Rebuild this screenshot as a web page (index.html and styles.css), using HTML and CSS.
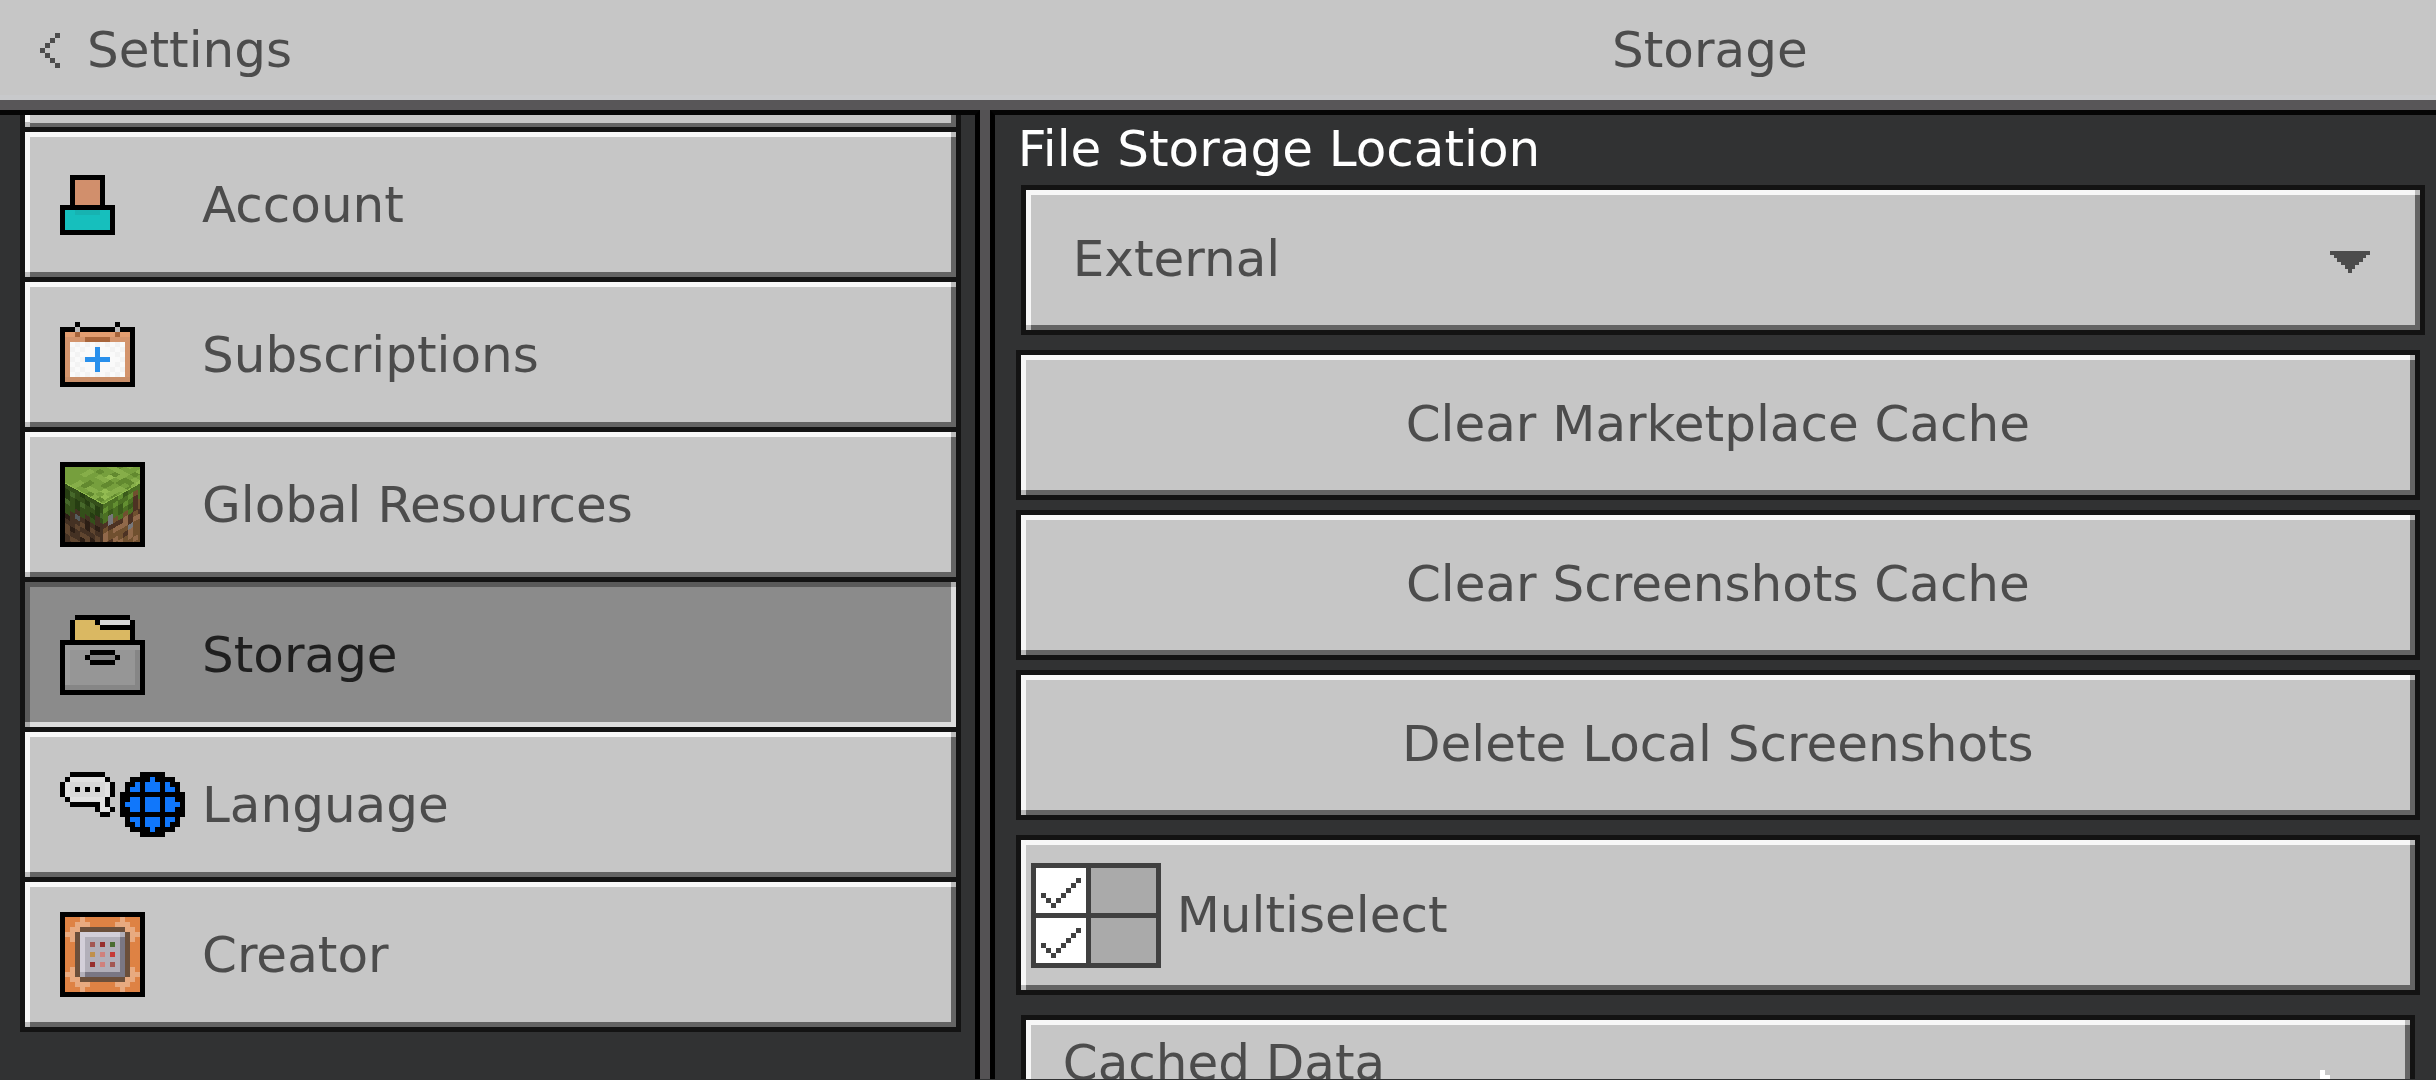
FILE: index.html
```html
<!DOCTYPE html>
<html lang="en">

<head>
  <meta charset="UTF-8">
  <meta name="viewport" content="width=device-width, initial-scale=1">
  <title>Settings</title>
  <link rel="stylesheet" href="styles.css">
</head>

<body>
  <header class="top-bar">
    <button class="back-button">
      <svg class="back-icon" viewBox="0 0 4 7" aria-hidden="true">
        <path fill="#4c4c4c" d="M3 0h1v1h-1zM2 1h1v1h-1zM1 2h1v1h-1zM0 3h1v1h-1zM1 4h1v1h-1zM2 5h1v1h-1zM3 6h1v1h-1z" />
      </svg>
      <span>Settings</span>
    </button>
    <h1 class="page-title">Storage</h1>
  </header>

  <div class="content">
    <!-- Section list -->
    <nav class="sidebar">
      <div class="section-list">
        <div class="bevel section-end"></div>

        <button class="bevel section">
          <span class="section-icon">
            <svg width="55" height="60" viewBox="0 0 11 12">
              <path d="M2 0h7v6h2v6h-11v-6h2z" />
              <path fill="#d18f6c" d="M3 1h5v5h-5z" />
              <path fill="#16bfbd" d="M1 7h9v4h-9z" />
              <path fill="#17b3b1" d="M3 7h5v1h-5z" />
            </svg>
          </span>
          <span>Account</span>
        </button>

        <button class="bevel section">
          <span class="section-icon">
            <svg width="75" height="65" viewBox="0 0 15 13">
              <path d="M3 0h1v1h-1zM11 0h1v1h-1zM0 1h15v12h-15z" />
              <path fill="#d3946c" d="M1 2h13v10h-13z" />
              <path fill="#e29d70" d="M1 2h13v1h-13z" />
              <path fill="#c98e68" d="M1 11h13v1h-13z" />
              <path fill="#b8b8b8" d="M3 1h1v1h-1zM11 1h1v1h-1z" />
              <path fill="#a8653b" d="M3 2h1v1h-1zM11 2h1v1h-1zM5 3h5v1h-5z" />
              <path fill="#fafafa" d="M2 4h11v7h-11z" />
              <path fill="#f3f3f3" d="M3 4h1v1h-1zM5 4h1v1h-1zM7 4h1v1h-1zM9 4h1v1h-1zM11 4h1v1h-1zM2 5h1v1h-1zM4 5h1v1h-1zM10 5h1v1h-1zM12 5h1v1h-1zM3 6h1v1h-1zM11 6h1v1h-1zM2 7h1v1h-1zM4 7h1v1h-1zM12 7h1v1h-1zM3 8h1v1h-1zM11 8h1v1h-1zM2 9h1v1h-1zM4 9h1v1h-1zM10 9h1v1h-1zM12 9h1v1h-1zM3 10h1v1h-1zM5 10h1v1h-1zM7 10h1v1h-1zM9 10h1v1h-1zM11 10h1v1h-1z" />
              <path fill="#2990ec" d="M7 5h1v5h-1zM5 7h5v1h-5z" />
            </svg>
          </span>
          <span>Subscriptions</span>
        </button>

        <button class="bevel section">
          <span class="section-icon">
            <svg width="85" height="85" viewBox="0 0 85 85">
              <clipPath id="blockClip">
                <path d="M5 5h75v75h-75z" />
              </clipPath>
              <path d="M0 0h85v85h-85z" />
              <g clip-path="url(#blockClip)">
                <!-- top face -->
                <path fill="#769f3d" d="M5 5h75v16l-37 21l-38 -21z" />
                <g transform="matrix(5 2.8 5 -2.8 5 21)">
                  <path fill="#86ae49" d="M1 0h1v2h-1zM3 1h2v1h-2zM5 0h1v1h-1zM6 2h1v3h-1zM2 4h2v1h-2zM4 6h1v2h-1zM0 3h1v2h-1zM7 6h1v1h-1zM1 7h3v1h-3zM5 9h1v1h-1zM7 4h1v1h-1zM3 9h1v2h-1zM6 7h1v1h-1z" />
                  <path fill="#62892f" d="M2 1h1v2h-1zM4 0h1v1h-1zM1 5h1v1h-1zM4 3h1v2h-1zM6 0h1v1h-1zM5 5h1v2h-1zM6 6h1v1h-1zM3 6h1v1h-1zM5 8h1v1h-1zM7 5h1v1h-1zM2 8h1v2h-1zM7 2h1v1h-1zM7 8h1v1h-1z" />
                  <path fill="#93bb52" d="M6 1h1v1h-1zM3 5h1v1h-1zM7 7h1v1h-1zM5 2h1v1h-1z" />
                </g>
                <!-- left face -->
                <g transform="matrix(5 2.8 0 5 5 21)">
                  <path fill="#443123" d="M0 0h8v13h-8z" />
                  <path fill="#5f452f" d="M0 8h1v2h-1zM2 7h1v1h-1zM3 8h2v1h-2zM5 6h1v1h-1zM1 10h2v1h-2zM4 9h1v2h-1zM6 7h1v2h-1zM3 6h1v1h-1z" />
                  <path fill="#2c1e15" d="M0 6h1v1h-1zM4 5h1v2h-1zM3 9h1v1h-1zM5 8h1v1h-1zM6 5h1v1h-1zM7 8h1v1h-1zM1 8h1v1h-1z" />
                  <path fill="#555b5d" d="M2 5h1v1h-1z" />
                  <path fill="#344f1a" d="M0 0h8v4h-1v-1h-1v2h-1v-1h-1v1h-1v-1h-1v1h-1v1h-1v-1h-1z" />
                  <path fill="#263d12" d="M0 1h1v2h-1zM2 2h1v2h-1zM4 1h1v1h-1zM5 3h1v1h-1zM3 0h1v1h-1zM6 1h1v2h-1z" />
                  <path fill="#46682a" d="M1 1h1v1h-1zM3 2h1v1h-1zM5 1h1v1h-1zM7 2h1v1h-1zM0 3h1v1h-1z" />
                </g>
                <!-- right face -->
                <g transform="matrix(5 -2.8 0 5 43 42)">
                  <path fill="#70502f" d="M0 0h8v13h-8z" />
                  <path fill="#91694a" d="M0 6h1v2h-1zM2 6h2v1h-2zM4 5h1v2h-1zM2 8h1v1h-1zM5 8h1v2h-1zM6 6h2v1h-2zM3 9h1v1h-1zM6 10h1v1h-1z" />
                  <path fill="#4d3223" d="M0 4h1v1h-1zM1 5h1v1h-1zM3 5h1v1h-1zM5 5h1v2h-1zM6 2h1v3h-1zM1 8h1v1h-1zM4 8h1v1h-1zM7 5h1v1h-1zM2 5h1v1h-1z" />
                  <path fill="#77777a" d="M1 3h1v2h-1zM5 7h1v1h-1z" />
                  <path fill="#4c7023" d="M0 0h8v3h-1v-2h-1v4h-1v-1h-1v1h-1v-1h-1v-1h-1v1h-1z" />
                  <path fill="#638f31" d="M0 1h1v1h-1zM2 1h1v1h-1zM4 2h1v1h-1zM3 0h1v1h-1zM5 1h1v1h-1z" />
                  <path fill="#3b5a1b" d="M1 2h1v1h-1zM3 2h1v2h-1zM5 3h1v1h-1zM4 0h1v1h-1z" />
                </g>
                <path fill="none" stroke="#8db84c" d="M5 21l38 21l37 -21" />
              </g>
            </svg>
          </span>
          <span>Global Resources</span>
        </button>

        <button class="bevel section selected" aria-current="page">
          <span class="section-icon">
            <svg width="85" height="80" viewBox="0 0 17 16">
              <path d="M3 0h11v1h1v4h2v11h-17v-11h2v-4h1z" />
              <path fill="#dab862" d="M3 1h4v1h1v1h6v2h-11z" />
              <path fill="#d9d9d9" d="M8 1h6v1h-6z" />
              <path fill="#9d9d9d" d="M1 6h15v9h-15z" />
              <path fill="#969696" d="M2 7h13v7h-13z" />
              <path fill="#868686" d="M15 7h1v8h-15v-1h14zM6 8h5v1h-5z" />
              <path d="M6 7h5v1h-5zM5 8h1v1h-1zM11 8h1v1h-1zM6 9h5v1h-5z" />
            </svg>
          </span>
          <span>Storage</span>
        </button>

        <button class="bevel section">
          <span class="section-icon">
            <svg width="125" height="65" viewBox="0 0 25 13">
              <!-- speech bubble -->
              <path d="M2 0h7v1h-7zM1 1h1v1h-1zM9 1h1v1h-1zM0 2h1v3h-1zM10 2h1v3h-1zM1 5h1v1h-1zM9 5h1v2h-1zM2 6h6v1h-6zM7 7h1v1h-1zM10 7h1v1h-1zM8 8h2v1h-2z" />
              <path fill="#e1e1e1" d="M2 1h7v1h1v3h-1v2h1v1h-2v-2h-6v-1h-1v-3h1z" />
              <path fill="#d8d8d8" d="M2 2h7v3h-7z" />
              <path d="M3 3h1v1h-1zM5 3h1v1h-1zM7 3h1v1h-1z" />
              <!-- globe -->
              <g transform="translate(12 0)">
                <path d="M4 0h5v1h2v1h1v2h1v5h-1v2h-1v1h-2v1h-5v-1h-2v-1h-1v-2h-1v-5h1v-2h1v-1h2z" />
                <path fill="#1077fb" d="M6 1h1v1h1v2h-3v-2h1zM3 2h1v2h-2v-1h1zM9 2h1v1h1v1h-2zM2 5h2v3h-2v-1h-1v-1h1zM5 5h3v3h-3zM9 5h2v1h1v1h-1v1h-2zM2 9h2v2h-1v-1h-1zM5 9h3v2h-1v1h-1v-1h-1zM9 9h2v1h-1v1h-1z" />
              </g>
            </svg>
          </span>
          <span>Language</span>
        </button>

        <button class="bevel section">
          <span class="section-icon">
            <svg width="85" height="85" viewBox="0 0 17 17">
              <path d="M0 0h17v17h-17z" />
              <path fill="#de8244" d="M1 1h15v15h-15z" />
              <path fill="#e8aa80" d="M4 1h1v1h1v1h-2v1h-1v2h-1v-1h-1v-1h1v-1h1v-1h1zM12 1h1v1h1v1h1v1h1v1h-1v1h-1v-2h-1v-1h-2v-1h1zM2 11h1v2h1v1h2v1h-1v1h-1v-1h-1v-1h-1v-1h-1v-1h1zM14 11h1v1h1v1h-1v1h-1v1h-1v1h-1v-1h-1v-1h2v-1h1z" />
              <path fill="#6b4f3b" d="M4 3h9v1h1v9h-1v1h-9v-1h-1v-9h1z" />
              <path fill="#b2afb9" d="M4 4h9v9h-9z" />
              <path fill="#d3cfd9" d="M4 4h8v1h-7v7h-1z" />
              <path fill="#7a7784" d="M12 5h1v8h-8v-1h7z" />
              <path fill="#a35753" d="M6 6h1v1h-1zM10 10h1v1h-1z" />
              <path fill="#972f2e" d="M8 6h1v1h-1zM6 10h1v1h-1z" />
              <path fill="#4a6c31" d="M10 6h1v1h-1z" />
              <path fill="#c0904c" d="M6 8h1v1h-1z" />
              <path fill="#d0807c" d="M8 8h1v1h-1zM8 10h1v1h-1z" />
              <path fill="#c63a37" d="M10 8h1v1h-1z" />
            </svg>
          </span>
          <span>Creator</span>
        </button>
      </div>
    </nav>

    <div class="divider"></div>

    <!-- Storage section -->
    <main class="panel">
      <label class="field-title" for="storageLocation">File Storage Location</label>
      <div class="dropdown">
        <select class="bevel dropdown-select" id="storageLocation">
          <option>External</option>
        </select>
        <svg class="dropdown-arrow" viewBox="0 0 40 22" aria-hidden="true">
          <path fill="#4c4c4c" d="M0 0h40v4h-4v3h-3v4h-4v3h-4v4h-3v4h-4v-4h-3v-4h-4v-3h-4v-4h-3v-3h-4z" />
        </svg>
      </div>

      <div class="actions">
        <button class="bevel outlined action">Clear Marketplace Cache</button>
        <button class="bevel outlined action">Clear Screenshots Cache</button>
        <button class="bevel outlined action">Delete Local Screenshots</button>
      </div>

      <button class="bevel outlined multiselect">
        <svg width="130" height="105" viewBox="0 0 26 21" aria-hidden="true">
          <path fill="#404040" d="M0 0h26v21h-26z" />
          <path fill="#fff" d="M1 1h10v9h-10zM1 11h10v9h-10z" />
          <path fill="#aaa" d="M12 1h13v9h-13zM12 11h13v9h-13z" />
          <path fill="#404040" d="M2 6h1v1h-1zM3 7h1v1h-1zM4 8h1v1h-1zM5 7h1v1h-1zM6 6h1v1h-1zM7 5h1v1h-1zM8 4h1v1h-1zM9 3h1v1h-1z" />
          <path fill="#404040" d="M2 16h1v1h-1zM3 17h1v1h-1zM4 18h1v1h-1zM5 17h1v1h-1zM6 16h1v1h-1zM7 15h1v1h-1zM8 14h1v1h-1zM9 13h1v1h-1z" />
        </svg>
        <span>Multiselect</span>
      </button>

      <button class="bevel outlined cached">
        <span>Cached Data</span>
        <svg class="cached-arrow" width="20" height="35" viewBox="0 0 4 7" aria-hidden="true">
          <path fill="#fff" d="M0 0h1v1h1v1h1v1h1v1h-1v1h-1v1h-1v1h-1z" />
        </svg>
      </button>
    </main>
  </div>
</body>

</html>
```

FILE: styles.css
```css
* {
  box-sizing: border-box;
}

body {
  display: flex;
  flex-direction: column;
  height: 100vh;
  margin: 0;
  overflow: hidden;
  background-color: #313233;
  color: #4c4c4c;
  font-family: "DejaVu Sans", sans-serif;
  font-size: 50px;
  line-height: 60px;
}

button,
select {
  margin: 0;
  padding: 0;
  border: none;
  border-radius: 0;
  background: none;
  color: inherit;
  font: inherit;
  cursor: pointer;
}

svg {
  display: block;
  flex: none;
  shape-rendering: crispEdges;
}

/* Raised edge shared by all buttons */
.bevel {
  --face: #c6c6c6;
  --light: #f7f7f7;
  --dark: #646464;
  --corner: #bbb;
  background:
    linear-gradient(var(--corner), var(--corner)) right top / 5px 5px no-repeat,
    linear-gradient(var(--corner), var(--corner)) left bottom / 5px 5px no-repeat,
    linear-gradient(var(--light), var(--light)) left top / 100% 5px no-repeat,
    linear-gradient(var(--light), var(--light)) left top / 5px 100% no-repeat,
    linear-gradient(var(--dark), var(--dark)) left bottom / 100% 5px no-repeat,
    linear-gradient(var(--dark), var(--dark)) right top / 5px 100% no-repeat,
    var(--face);
  background-origin: padding-box;
  background-clip: padding-box;
}

.outlined {
  border: 5px solid #131313;
}

/* Header */
.top-bar,
.content {
  display: grid;
  grid-template-columns: 21fr 10px 31fr;
}

.top-bar {
  flex: none;
  height: 110px;
  border-bottom: 10px solid #585658;
  background-color: #c6c6c6;
  box-shadow: inset 0 -5px #c8c9cb;
}

.back-button {
  display: flex;
  align-items: center;
  gap: 27px;
  padding-left: 40px;
}

.back-icon {
  width: 20px;
  height: 35px;
}

.page-title {
  grid-column: 3;
  align-self: center;
  margin: 0;
  padding-right: 6px;
  font-size: inherit;
  font-weight: normal;
  text-align: center;
}

.content {
  flex: 1;
  min-height: 0;
  border-bottom: 1px solid #313233;
}

/* Section list */
.sidebar {
  min-width: 0;
  padding: 0 14px 0 20px;
  overflow: hidden;
  border-top: 5px solid #050505;
  border-right: 5px solid #000;
}

.section-list {
  display: flex;
  flex-direction: column;
  gap: 5px;
  padding: 0 5px 5px;
  background-color: #131313;
}

/* Bottom edge of the section scrolled out above */
.section-end {
  height: 12px;
  background-position: right -5px, left bottom, left -5px, left top, left bottom, right top;
  background-size: 5px 5px, 5px 5px, 100% 5px, 5px 100%, 100% 4px, 5px 100%;
  background-position: right -5px top -5px, left bottom, left top -5px, left top, left bottom, right top;
}

.section {
  display: flex;
  align-items: center;
  height: 145px;
  padding-left: 35px;
  text-align: left;
}

.section-icon {
  flex: none;
  width: 142px;
}

.selected {
  --face: #8b8b8b;
  --light: #5a5a5a;
  --dark: #dcdcdc;
  --corner: #acacac;
  color: #1f1f1f;
}

.divider {
  background-color: #545254;
}

/* Storage section */
.panel {
  display: flex;
  flex-direction: column;
  min-width: 0;
  padding: 0 11px 0 21px;
  overflow: hidden;
  border-top: 5px solid #050505;
  border-left: 5px solid #000;
}

.field-title {
  flex: none;
  height: 70px;
  padding: 4px 0 0 2px;
  color: #fff;
}

.dropdown {
  position: relative;
  flex: none;
  margin-left: 5px;
}

.dropdown-select {
  display: block;
  width: 100%;
  height: 150px;
  padding: 0 110px 2px 47px;
  border: 5px solid #131313;
  appearance: none;
}

.dropdown-arrow {
  position: absolute;
  top: 66px;
  right: 55px;
  width: 40px;
  height: 22px;
  pointer-events: none;
}

.actions {
  display: flex;
  flex: none;
  flex-direction: column;
  gap: 10px;
  margin: 15px 5px 15px 0;
}

.action {
  display: flex;
  align-items: center;
  justify-content: center;
  height: 150px;
  padding-bottom: 2px;
}

.multiselect {
  display: flex;
  flex: none;
  align-items: center;
  gap: 16px;
  height: 160px;
  margin-right: 5px;
  padding-left: 10px;
}

.cached {
  display: flex;
  flex: none;
  align-items: flex-start;
  justify-content: space-between;
  height: 150px;
  margin: 20px 10px 0 5px;
  padding: 13px 70px 0 37px;
}

.cached-arrow {
  margin-top: 37px;
}
```
